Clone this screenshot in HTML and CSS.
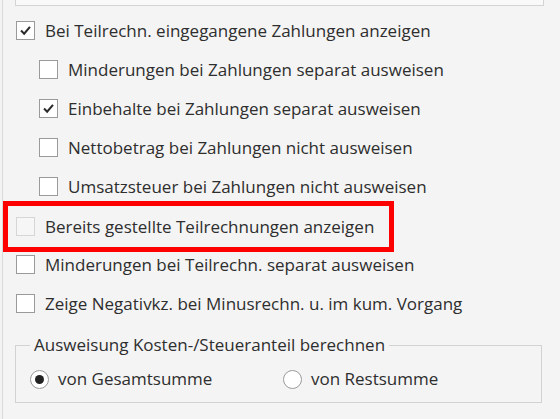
FILE: index.html
```html
<!DOCTYPE html>
<html lang="de">
<head>
<meta charset="utf-8">
<link rel="stylesheet" href="styles.css">
</head>
<body>
<div class="panel">
  <div class="topbox"></div>
  <div class="rows">
    <div class="row">
      <span class="cb checked"><svg viewBox="0 0 19 19"><path d="M4.5 9.5 L8 13 L14.5 5.5" /></svg></span>
      <span class="label">Bei Teilrechn. eingegangene Zahlungen anzeigen</span>
    </div>
    <div class="row sub">
      <span class="cb"></span>
      <span class="label">Minderungen bei Zahlungen separat ausweisen</span>
    </div>
    <div class="row sub">
      <span class="cb checked"><svg viewBox="0 0 19 19"><path d="M4.5 9.5 L8 13 L14.5 5.5" /></svg></span>
      <span class="label">Einbehalte bei Zahlungen separat ausweisen</span>
    </div>
    <div class="row sub">
      <span class="cb"></span>
      <span class="label">Nettobetrag bei Zahlungen nicht ausweisen</span>
    </div>
    <div class="row sub">
      <span class="cb"></span>
      <span class="label">Umsatzsteuer bei Zahlungen nicht ausweisen</span>
    </div>
    <div class="row highlight">
      <span class="cb disabled"></span>
      <span class="label">Bereits gestellte Teilrechnungen anzeigen</span>
    </div>
    <div class="row">
      <span class="cb"></span>
      <span class="label">Minderungen bei Teilrechn. separat ausweisen</span>
    </div>
    <div class="row">
      <span class="cb"></span>
      <span class="label">Zeige Negativkz. bei Minusrechn. u. im kum. Vorgang</span>
    </div>
  </div>
  <fieldset class="group">
    <legend class="legend">Ausweisung Kosten-/Steueranteil berechnen</legend>
    <div class="radios">
      <div class="radio-item">
        <span class="radio on"></span>
        <span class="label">von Gesamtsumme</span>
      </div>
      <div class="radio-item">
        <span class="radio"></span>
        <span class="label">von Restsumme</span>
      </div>
    </div>
  </fieldset>
</div>
</body>
</html>
```

FILE: styles.css
```css
html, body {
  margin: 0;
  padding: 0;
  background: #f4f4f4;
  height: 100%;
  overflow: hidden;
}

body {
  font-family: "Open Sans", "Noto Sans", sans-serif;
  font-size: 17px;
  color: #2e2e2e;
}

.panel {
  margin-left: 2px;
  border-left: 1px solid #d9d9d9;
  height: 100%;
  box-sizing: border-box;
}

.topbox {
  margin-left: 12px;
  width: 527px;
  height: 5px;
  border: 1px solid #d4d4d4;
  border-top: none;
  background: #f9f9f9;
}

.rows {
  margin-top: 5px;
  display: flex;
  flex-direction: column;
}

.row {
  height: 39px;
  display: flex;
  align-items: center;
  padding-left: 13px;
  box-sizing: border-box;
}

.row.sub {
  padding-left: 36px;
}

.row.highlight {
  margin-left: 0;
  width: 391px;
  border: 5px solid #ff0000;
  margin-top: -5px;
  margin-bottom: -7px;
  height: 51px;
  padding-left: 8px;
}

.cb {
  width: 19px;
  height: 19px;
  box-sizing: border-box;
  border: 1px solid #9a9a9a;
  background: #ffffff;
  flex: none;
  display: flex;
  margin-right: 10px;
}

.cb svg {
  width: 100%;
  height: 100%;
}

.cb svg path {
  fill: none;
  stroke: #2b2b2b;
  stroke-width: 2.3;
}

.cb.disabled {
  border-color: #d6d6d6;
  background: #f6f6f6;
}

.label {
  white-space: nowrap;
  line-height: 22px;
}

.group {
  margin: 11px 0 0 12px;
  width: 527px;
  box-sizing: border-box;
  border: 1px solid #d2d2d2;
  padding: 12px 0 5px 14px;
  height: 69px;
}

.legend {
  margin-left: 0;
  padding: 0 4px;
  line-height: 22px;
}

.radios {
  display: grid;
  grid-template-columns: 253px 1fr;
}

.radio-item {
  display: flex;
  align-items: center;
}

.radio {
  width: 19px;
  height: 19px;
  box-sizing: border-box;
  border-radius: 50%;
  border: 1px solid #9a9a9a;
  background: #ffffff;
  margin-right: 9px;
  display: flex;
  align-items: center;
  justify-content: center;
}

.radio.on::after {
  content: "";
  width: 9px;
  height: 9px;
  border-radius: 50%;
  background: #222222;
}
```
